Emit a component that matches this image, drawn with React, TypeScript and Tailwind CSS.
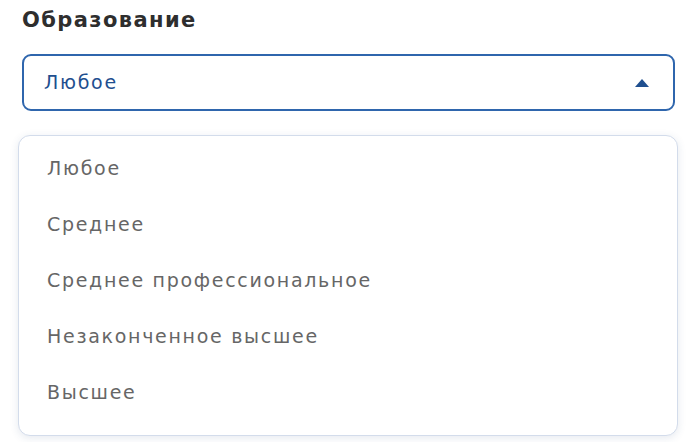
const options = [
  "Любое",
  "Среднее",
  "Среднее профессиональное",
  "Незаконченное высшее",
  "Высшее",
];

export default function App() {
  return (
    <div
      className="w-[695px] h-[442px] bg-white overflow-hidden pl-[22px] pr-[20px] pt-[5px]"
      style={{ fontFamily: '"DejaVu Sans", "Noto Sans", sans-serif' }}
    >
      <div className="text-[21px] leading-[30px] font-semibold tracking-[1.4px] text-[#2e2e2e]">Образование</div>
      <div className="mt-[19px] h-[57px] rounded-[9px] border-2 border-[#2f66ad] flex items-center justify-between pl-[20px] pr-[24px]">
        <span className="text-[19px] tracking-[1.7px] text-[#1f4f8f]">Любое</span>
        <svg width="14" height="8" viewBox="0 0 14 8">
          <path d="M7 0 L14 8 L0 8 Z" fill="#1f4f8f" />
        </svg>
      </div>
      <div className="mt-[24px] -ml-[4px] mr-[-3px] rounded-[12px] border border-[#d3dceb] shadow-[0_2px_8px_rgba(40,70,120,0.12)] bg-white pt-[4px] pb-[15px]">
        {options.map((o) => (
          <div key={o} className="h-[56px] flex items-center pl-[28px] text-[19px] tracking-[1.7px] text-[#666666]">
            {o}
          </div>
        ))}
      </div>
    </div>
  );
}
